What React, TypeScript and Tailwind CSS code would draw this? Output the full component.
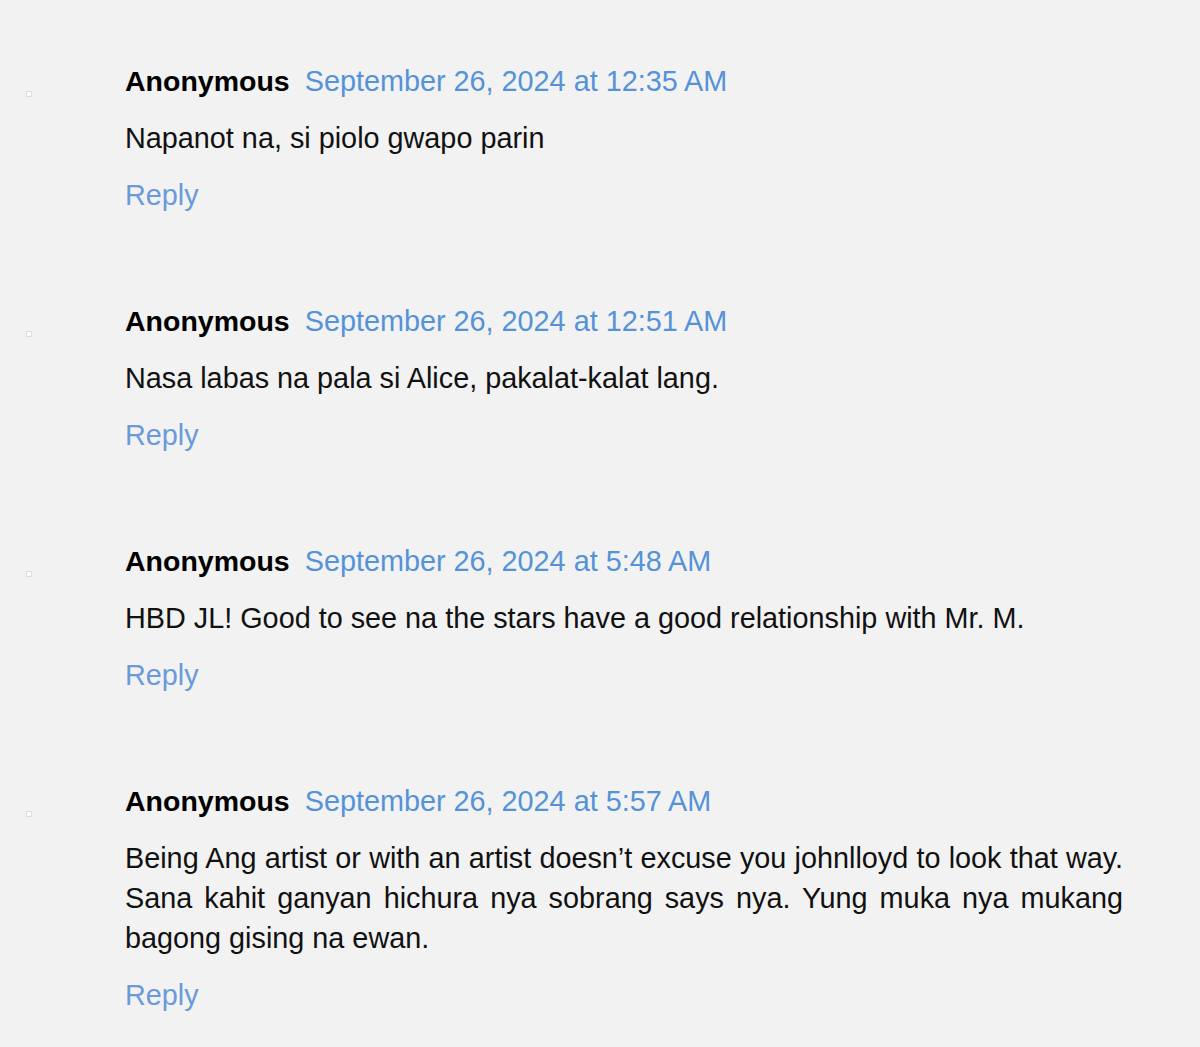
import React from 'react'

interface Comment {
    author: string
    date: string
    body: string
}

const comments: Comment[] = [
    {
        author: 'Anonymous',
        date: 'September 26, 2024 at 12:35 AM',
        body: 'Napanot na, si piolo gwapo parin',
    },
    {
        author: 'Anonymous',
        date: 'September 26, 2024 at 12:51 AM',
        body: 'Nasa labas na pala si Alice, pakalat-kalat lang.',
    },
    {
        author: 'Anonymous',
        date: 'September 26, 2024 at 5:48 AM',
        body: 'HBD JL! Good to see na the stars have a good relationship with Mr. M.',
    },
    {
        author: 'Anonymous',
        date: 'September 26, 2024 at 5:57 AM',
        body: 'Being Ang artist or with an artist doesn\u2019t excuse you johnlloyd to look that way. Sana kahit ganyan hichura nya sobrang says nya. Yung muka nya mukang bagong gising na ewan.',
    },
]

const CommentItem: React.FC<{ comment: Comment }> = ({ comment }) => (
    <div className="flex">
        {/* avatar placeholder */}
        <div className="w-[125px] shrink-0 pl-[26px] pt-[30px]">
            <div className="w-[6px] h-[6px] bg-white border border-[#dcdcdc]" />
        </div>
        <div className="w-[998px]">
            <div className="flex items-center gap-[15px] leading-[40px]">
                <span className="font-bold text-black text-[28.5px]">{comment.author}</span>
                <a className="text-[#5592d8]">{comment.date}</a>
            </div>
            <p className="mt-[17px] text-[#111] leading-[40px] text-justify">{comment.body}</p>
            <a className="block mt-[17px] leading-[40px] text-[#6b9ad8] w-fit">Reply</a>
        </div>
    </div>
)

export default function App() {
    return (
        <div
            className="min-h-[1047px] bg-[#f2f2f2] pt-[61px] text-[28.8px] flex flex-col gap-[86px]"
            style={{ fontFamily: '"Liberation Sans", Arial, sans-serif' }}
        >
            {comments.map((c, i) => (
                <CommentItem key={i} comment={c} />
            ))}
        </div>
    )
}
